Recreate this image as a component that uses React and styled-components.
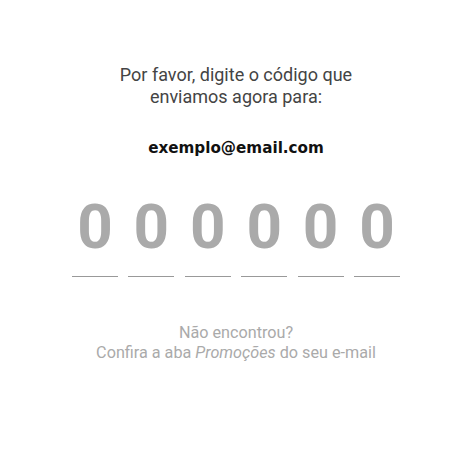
import styled, { createGlobalStyle } from 'styled-components'

const Global = createGlobalStyle`
  body {
    margin: 0;
    background: #fff;
    font-family: Roboto, "Liberation Sans", sans-serif;
  }
`

const Page = styled.div`
  width: 472px;
  height: 474px;
  display: flex;
  flex-direction: column;
  align-items: center;
  padding-top: 64px;
  box-sizing: border-box;
`

const Intro = styled.p`
  margin: 0;
  font-size: 18px;
  line-height: 22px;
  color: #444;
  text-align: center;
`

const Email = styled.div`
  margin-top: 31px;
  font-family: "DejaVu Sans", sans-serif;
  font-weight: 700;
  font-size: 15.2px;
  color: #111;
`

const CodeRow = styled.div`
  display: flex;
  gap: 10.4px;
  margin-top: 39px;
`

const Cell = styled.div`
  width: 46px;
  display: flex;
  flex-direction: column;
  align-items: center;
`

const Digit = styled.span`
  font-size: 62px;
  font-weight: 700;
  line-height: 62px;
  color: #aaa;
`

const Line = styled.div`
  width: 100%;
  height: 1px;
  background: #999;
  margin-top: 18px;
`

const Hint = styled.p`
  margin: 46px 0 0;
  font-size: 16.2px;
  line-height: 20px;
  color: #aaa;
  text-align: center;

  em {
    font-style: italic;
  }
`

export default function App() {
  const code = ['0', '0', '0', '0', '0', '0']
  return (
    <Page>
      <Global />
      <Intro>
        Por favor, digite o código que
        <br />
        enviamos agora para:
      </Intro>
      <Email>exemplo@email.com</Email>
      <CodeRow>
        {code.map((d, i) => (
          <Cell key={i}>
            <Digit>{d}</Digit>
            <Line />
          </Cell>
        ))}
      </CodeRow>
      <Hint>
        Não encontrou?
        <br />
        Confira a aba <em>Promoções</em> do seu e-mail
      </Hint>
    </Page>
  )
}
